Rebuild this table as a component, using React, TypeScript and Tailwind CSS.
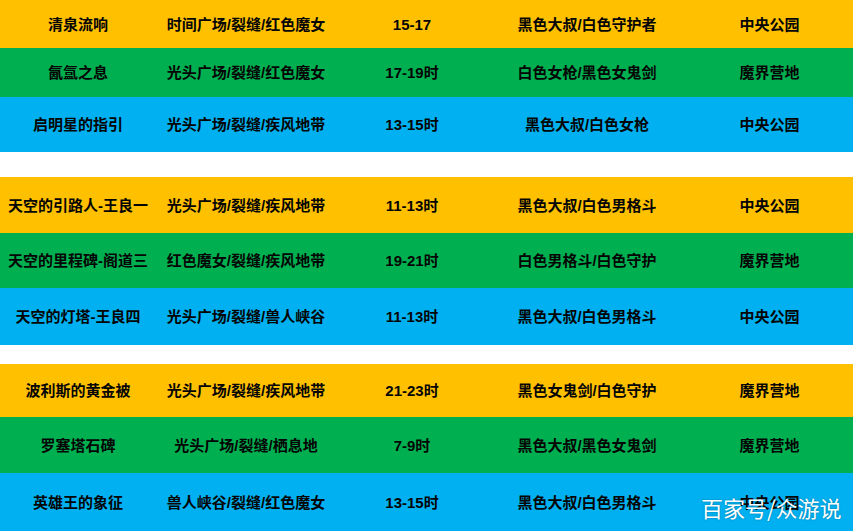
import React from "react";

type Row = { cells: string[]; color: string; h: string };

const yellow = "bg-[#ffc000]";
const green = "bg-[#00b050]";
const blue = "bg-[#00b0f0]";

const groups: Row[][] = [
  [
    { cells: ["清泉流响", "时间广场/裂缝/红色魔女", "15-17", "黑色大叔/白色守护者", "中央公园"], color: yellow, h: "h-[48px]" },
    { cells: ["氤氲之息", "光头广场/裂缝/红色魔女", "17-19时", "白色女枪/黑色女鬼剑", "魔界营地"], color: green, h: "h-[49px]" },
    { cells: ["启明星的指引", "光头广场/裂缝/疾风地带", "13-15时", "黑色大叔/白色女枪", "中央公园"], color: blue, h: "h-[55px]" },
  ],
  [
    { cells: ["天空的引路人-王良一", "光头广场/裂缝/疾风地带", "11-13时", "黑色大叔/白色男格斗", "中央公园"], color: yellow, h: "h-[56px]" },
    { cells: ["天空的里程碑-阁道三", "红色魔女/裂缝/疾风地带", "19-21时", "白色男格斗/白色守护", "魔界营地"], color: green, h: "h-[55px]" },
    { cells: ["天空的灯塔-王良四", "光头广场/裂缝/兽人峡谷", "11-13时", "黑色大叔/白色男格斗", "中央公园"], color: blue, h: "h-[57px]" },
  ],
  [
    { cells: ["波利斯的黄金被", "光头广场/裂缝/疾风地带", "21-23时", "黑色女鬼剑/白色守护", "魔界营地"], color: yellow, h: "h-[53px]" },
    { cells: ["罗塞塔石碑", "光头广场/裂缝/栖息地", "7-9时", "黑色大叔/黑色女鬼剑", "魔界营地"], color: green, h: "h-[56px]" },
    { cells: ["英雄王的象征", "兽人峡谷/裂缝/红色魔女", "13-15时", "黑色大叔/白色男格斗", "中央公园"], color: blue, h: "h-[58px]" },
  ],
];

const gaps = ["h-[25px]", "h-[19px]"];

const TableRow = ({ row }: { row: Row }) => (
  <div className={`grid grid-cols-[156px_180px_152px_198px_167px] ${row.color} ${row.h}`}>
    {row.cells.map((c, i) => (
      <div key={i} className="flex items-center justify-center whitespace-nowrap pt-[2px]">
        {c}
      </div>
    ))}
  </div>
);

export default function App() {
  return (
    <div
      className="relative w-[853px] h-[531px] overflow-hidden bg-white text-[15px] font-semibold text-[#050505]"
      style={{ fontFamily: '"Liberation Sans", "Noto Sans CJK SC", sans-serif' }}
    >
      {groups.map((g, gi) => (
        <React.Fragment key={gi}>
          {g.map((r, ri) => (
            <TableRow key={ri} row={r} />
          ))}
          {gi < gaps.length && <div className={gaps[gi]} />}
        </React.Fragment>
      ))}
      <div
        className="absolute left-[701px] top-[492px] text-[22px] leading-[30px] font-normal text-white [text-shadow:0_0_2px_rgba(0,0,0,0.35)]"
        style={{ fontFamily: '"Noto Sans CJK SC", sans-serif' }}
      >
        百家号/众游说
      </div>
    </div>
  );
}
